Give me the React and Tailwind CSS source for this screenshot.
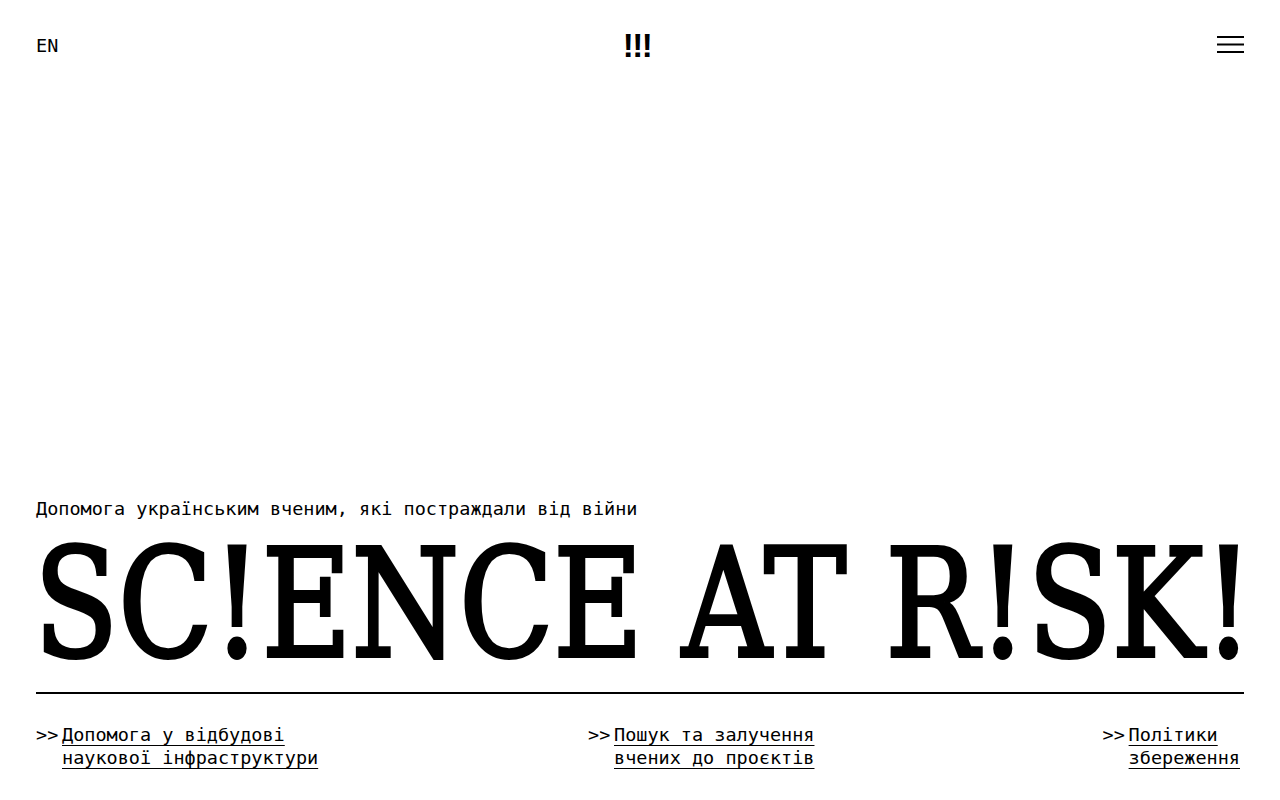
import React from "react";

const mono = "font-['DejaVu_Sans_Mono','Liberation_Mono',monospace]";

function LinkCol({ lines, className = "" }) {
  return (
    <div className={`flex ${className}`}>
      <span className="w-[26px] shrink-0">&gt;&gt;</span>
      <a href="#" className="flex flex-col">
        {lines.map((l, i) => (
          <span key={i} className="underline decoration-[1px] underline-offset-[4px] whitespace-nowrap">
            {l}
          </span>
        ))}
      </a>
    </div>
  );
}

export default function App() {
  return (
    <div className={`h-screen w-full overflow-hidden bg-white text-black flex flex-col px-9 ${mono}`}>
      <header className="h-[90px] shrink-0 grid grid-cols-3 items-center">
        <div className="text-[18.5px] leading-none pt-[3px]">EN</div>
        <div className="flex justify-center">
          <span className="font-['Liberation_Sans',Arial,sans-serif] font-bold text-[33px] leading-none tracking-[-1.5px] mr-[6px]">
            !!!
          </span>
        </div>
        <div className="flex justify-end">
          <svg width="27" height="18" viewBox="0 0 27 18" className="mt-[-1px]">
            <rect x="0" y="0" width="27" height="2" fill="#000" />
            <rect x="0" y="7.5" width="27" height="2" fill="#000" />
            <rect x="0" y="15" width="27" height="2" fill="#000" />
          </svg>
        </div>
      </header>

      <div className="flex-1" />

      <p className="text-[18.5px] leading-[24px]">
        Допомога українським вченим, які постраждали від війни
      </p>

      <div className="mt-[8px] h-[150px] whitespace-nowrap -ml-[2px]">
        <h1 className="inline-block origin-left scale-x-[0.82] font-['DejaVu_Serif',serif] font-normal text-[150px] leading-none [-webkit-text-stroke:4px_black]">
          SC!ENCE AT R!SK!
        </h1>
      </div>

      <div className="mt-[13px] h-[2px] bg-black" />

      <div className="mt-[29px] pb-[31px] grid grid-cols-[552px_1fr_auto] text-[18.5px] leading-[23px]">
        <LinkCol lines={["Допомога у відбудові", "наукової інфраструктури"]} />
        <LinkCol lines={["Пошук та залучення", "вчених до проєктів"]} />
        <LinkCol lines={["Політики", "збереження"]} className="pr-[4px]" />
      </div>
    </div>
  );
}
